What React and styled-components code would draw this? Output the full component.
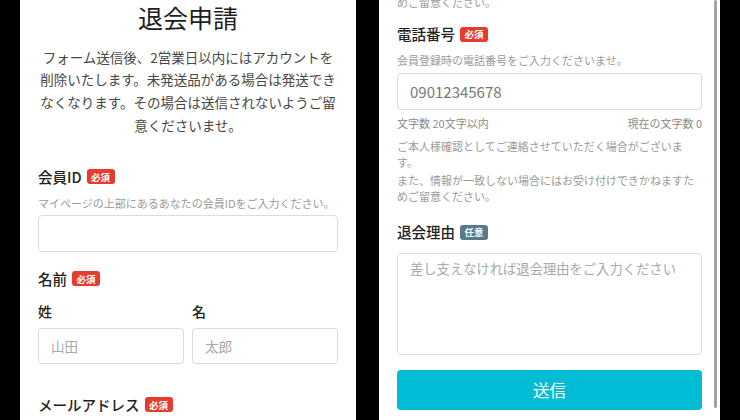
import React from "react";
import styled, { createGlobalStyle } from "styled-components";

const GlobalStyle = createGlobalStyle`
  html, body {
    margin: 0;
    padding: 0;
    background: #000;
  }
  body {
    font-family: "Noto Sans CJK JP", "Noto Sans", sans-serif;
  }
  * {
    box-sizing: border-box;
  }
`;

const Stage = styled.div`
  width: 740px;
  height: 420px;
  display: flex;
  gap: 23px;
  padding-left: 20px;
  overflow: hidden;
  background: #000;
`;

const Screen = styled.div`
  position: relative;
  width: ${(p) => p.$width}px;
  height: 420px;
  flex-shrink: 0;
  background: #fff;
  padding: 0 18px;
  overflow: hidden;
`;

const ScrollContent = styled.div`
  margin-top: ${(p) => p.$offset || 0}px;
  display: flex;
  flex-direction: column;
`;

const Scrollbar = styled.div`
  position: absolute;
  top: 0;
  right: 3px;
  width: 3px;
  height: 408px;
  border-radius: 2px;
  background: #a3a3a3;
`;

const Title = styled.h1`
  margin: 0;
  font-size: 25px;
  line-height: 34px;
  font-weight: 400;
  color: #1e1e1e;
  text-align: center;
`;

const Lead = styled.p`
  margin: 11.6px 0 0;
  font-size: 13.5px;
  line-height: 22.7px;
  color: #474747;
  text-align: center;
`;

const LabelRow = styled.div`
  display: flex;
  align-items: center;
  height: 20px;
  margin-top: ${(p) => p.$mt}px;
`;

const Label = styled.span`
  font-size: ${(p) => (p.$small ? 14 : 14.5)}px;
  line-height: 20px;
  font-weight: 500;
  color: #222;
`;

const Badge = styled.span`
  margin-left: 5px;
  width: 28px;
  height: 15px;
  border-radius: 3px;
  display: inline-flex;
  align-items: center;
  justify-content: center;
  font-size: 9.5px;
  font-weight: 700;
  color: #fff;
  background: ${(p) => (p.$optional ? "#587a8c" : "#e63b2e")};
`;

const Helper = styled.p`
  margin: ${(p) => p.$mt || 0}px 0 0;
  font-size: 11px;
  line-height: ${(p) => p.$lh || 16}px;
  color: #9a9a9a;
`;

const Field = styled.input`
  display: block;
  width: 100%;
  height: ${(p) => p.$h}px;
  margin-top: ${(p) => p.$mt}px;
  padding: 0 12px;
  border: 1px solid #dcdcdc;
  border-radius: 4px;
  background: #fff;
  font-family: inherit;
  font-size: ${(p) => p.$fs || 13.5}px;
  color: #333;
  outline: none;
  &::placeholder {
    color: ${(p) => p.$phColor || "#a8a8a8"};
  }
`;

const TextArea = styled.textarea`
  display: block;
  width: 100%;
  height: 102px;
  margin-top: 11px;
  padding: 5px 12px;
  border: 1px solid #dcdcdc;
  border-radius: 4px;
  resize: none;
  font-family: inherit;
  font-size: 13.3px;
  line-height: 20px;
  outline: none;
  &::placeholder {
    color: #a8a8a8;
  }
`;

const NameGrid = styled.div`
  display: grid;
  grid-template-columns: 1fr 1fr;
  column-gap: 8px;
  margin-top: 12px;
`;

const NameCol = styled.div`
  display: flex;
  flex-direction: column;
`;

const Counter = styled.div`
  display: flex;
  justify-content: space-between;
  margin-top: 5px;
  font-size: 11px;
  line-height: 16px;
  color: #8c8c8c;
`;

const Notes = styled.div`
  margin-top: 8px;
  display: flex;
  flex-direction: column;
  gap: 3.25px;
`;

const SubmitButton = styled.button`
  display: block;
  width: 100%;
  height: 40px;
  margin-top: 15px;
  border: none;
  border-radius: 4px;
  background: #00bcd4;
  color: #fff;
  font-family: inherit;
  font-size: 16.5px;
  font-weight: 400;
  cursor: pointer;
`;

const Required = () => <Badge>必須</Badge>;

const LeftScreen = () => (
  <Screen $width={336}>
    <ScrollContent>
      <Title>退会申請</Title>
      <Lead>
        フォーム送信後、2営業日以内にはアカウントを削除いたします。未発送品がある場合は発送できなくなります。その場合は送信されないようご留意くださいませ。
      </Lead>

      <LabelRow $mt={30.5}>
        <Label>会員ID</Label>
        <Required />
      </LabelRow>
      <Helper $mt={8}>マイページの上部にあるあなたの会員IDをご入力ください。</Helper>
      <Field $h={37} $mt={4} />

      <LabelRow $mt={17}>
        <Label>名前</Label>
        <Required />
      </LabelRow>
      <NameGrid>
        <NameCol>
          <LabelRow $mt={0}>
            <Label $small>姓</Label>
          </LabelRow>
          <Field $h={36} $mt={7} placeholder="山田" />
        </NameCol>
        <NameCol>
          <LabelRow $mt={0}>
            <Label $small>名</Label>
          </LabelRow>
          <Field $h={36} $mt={7} placeholder="太郎" />
        </NameCol>
      </NameGrid>

      <LabelRow $mt={31}>
        <Label>メールアドレス</Label>
        <Required />
      </LabelRow>
    </ScrollContent>
  </Screen>
);

const RightScreen = () => (
  <Screen $width={341}>
    <ScrollContent $offset={-6}>
      <Helper $lh={16}>めご留意ください。</Helper>

      <LabelRow $mt={14}>
        <Label>電話番号</Label>
        <Required />
      </LabelRow>
      <Helper $mt={8}>会員登録時の電話番号をご入力くださいませ。</Helper>
      <Field $h={37} $mt={5} $fs={15} $phColor="#777" placeholder="09012345678" />
      <Counter>
        <span>文字数 20文字以内</span>
        <span>現在の文字数 0</span>
      </Counter>
      <Notes>
        <Helper $lh={15.5}>ご本人様確認としてご連絡させていただく場合がございます。</Helper>
        <Helper $lh={15.5}>また、情報が一致しない場合にはお受け付けできかねますためご留意ください。</Helper>
      </Notes>

      <LabelRow $mt={17.75}>
        <Label>退会理由</Label>
        <Badge $optional>任意</Badge>
      </LabelRow>
      <TextArea placeholder="差し支えなければ退会理由をご入力ください" />

      <SubmitButton type="button">送信</SubmitButton>
    </ScrollContent>
    <Scrollbar />
  </Screen>
);

export default function App() {
  return (
    <>
      <GlobalStyle />
      <Stage>
        <LeftScreen />
        <RightScreen />
      </Stage>
    </>
  );
}
